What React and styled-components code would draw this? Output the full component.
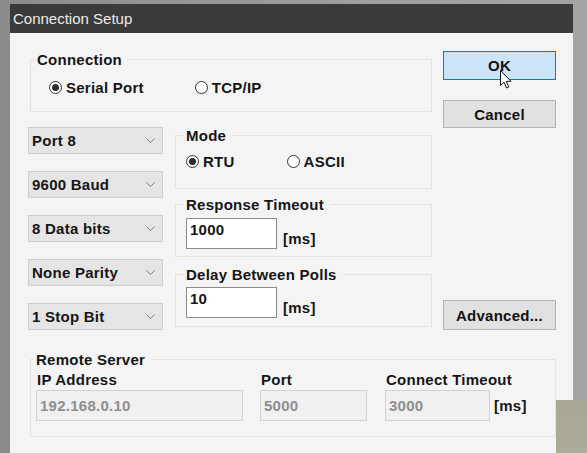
import React from 'react';
import styled, { createGlobalStyle } from 'styled-components';

const GlobalStyle = createGlobalStyle`
  html, body {
    margin: 0;
    padding: 0;
  }

  body {
    width: 587px;
    height: 453px;
    overflow: hidden;
    font-family: "Liberation Sans", Arial, sans-serif;
  }
`;

const Screen = styled.div`
  position: relative;
  height: 453px;
  box-sizing: border-box;
  padding: 4px 14px 0 10px;
  overflow: hidden;
  background: linear-gradient(to right, #8b8b8b, #9e9e9e 60%, #a4a4a4);
`;

const Desktop = styled.div`
  position: absolute;
  right: 0;
  bottom: 0;
  width: 31px;
  height: 53px;
  background: linear-gradient(to bottom, #a9a896, #adac9b);
`;

const Dialog = styled.div`
  display: flex;
  flex-direction: column;
  width: 563px;
  height: 470px;
  background: #f4f4f4;
`;

const TitleBar = styled.div`
  display: flex;
  align-items: center;
  height: 29px;
  padding-left: 3px;
  background: #3a3a3a;
  color: #ececec;
  font-size: 15px;
`;

const Body = styled.div`
  display: grid;
  grid-template-columns: 402px 113px;
  grid-template-areas:
    'conn buttons'
    'main buttons'
    'remote remote';
  column-gap: 11px;
  padding: 18px 17px 0 20px;
  color: #161616;
  font-size: 15px;
  font-weight: bold;
  letter-spacing: 0.25px;
  line-height: 17px;
`;

const Group = styled.fieldset`
  grid-area: ${(p) => p.$area || 'auto'};
  margin: ${(p) => p.$margin || '0'};
  padding: ${(p) => p.$pad};
  min-width: 0;
  border: 1px solid #e3e3e3;
`;

const Legend = styled.legend`
  margin-left: -2px;
  padding: 0 6px 0 2px;
  line-height: 17px;
`;

const RadioRow = styled.div`
  display: flex;
  align-items: center;
  gap: ${(p) => p.$gap}px;
  height: 18px;
  margin-left: ${(p) => p.$indent || 0}px;
`;

const RadioItem = styled.label`
  display: flex;
  align-items: center;
  gap: 4px;
`;

const Circle = styled.span`
  display: flex;
  align-items: center;
  justify-content: center;
  width: 13px;
  height: 13px;
  box-sizing: border-box;
  border: 1px solid #333;
  border-radius: 50%;
  background: #fff;

  &::after {
    content: '';
    display: ${(p) => (p.$checked ? 'block' : 'none')};
    width: 7px;
    height: 7px;
    border-radius: 50%;
    background: #2c2c2c;
  }
`;

const Main = styled.div`
  grid-area: main;
  display: flex;
  gap: 12px;
  margin-top: 15px;
`;

const SelectColumn = styled.div`
  display: flex;
  flex-direction: column;
  gap: 17px;
  width: 135px;
  margin-left: -2px;
`;

const Select = styled.div`
  display: flex;
  align-items: center;
  justify-content: space-between;
  height: 27px;
  box-sizing: border-box;
  padding: 0 7px 0 3px;
  background: #e5e5e5;
  border: 1px solid #cdcdcd;
`;

const GroupColumn = styled.div`
  flex: 1;
  display: flex;
  flex-direction: column;
  gap: ${(p) => p.$gap || 8}px;
`;

const ValueRow = styled.div`
  display: flex;
  align-items: ${(p) => p.$align || 'flex-end'};
  gap: ${(p) => p.$gap || 6}px;
`;

const TextBox = styled.div`
  width: ${(p) => p.$w}px;
  height: 31px;
  box-sizing: border-box;
  padding: ${(p) => (p.$disabled ? '6px 3px 0' : '2px 3px 0')};
  background: ${(p) => (p.$disabled ? '#f0f0f0' : '#ffffff')};
  border: 1px solid ${(p) => (p.$disabled ? '#d2d2d2' : '#8a8a8a')};
  color: ${(p) => (p.$disabled ? '#8e8e8e' : '#161616')};
`;

const Unit = styled.span`
  margin-bottom: ${(p) => p.$lift || 0}px;
`;

const Buttons = styled.div`
  grid-area: buttons;
  display: flex;
  flex-direction: column;
  gap: 20px;
`;

const Button = styled.div`
  position: relative;
  display: flex;
  align-items: center;
  justify-content: center;
  height: ${(p) => p.$h || 28}px;
  box-sizing: border-box;
  background: ${(p) => (p.$primary ? '#cce4f7' : '#e1e1e1')};
  border: 1px solid ${(p) => (p.$primary ? '#0a78d7' : '#b4b4b4')};
  margin-top: ${(p) => (p.$bottom ? 'auto' : '0')};
  color: #111;
`;

const Pointer = styled.svg`
  position: absolute;
  left: 56px;
  top: 18px;
`;

const RemoteGrid = styled.div`
  display: grid;
  grid-template-columns: 206px 107px auto;
  column-gap: 18px;
  row-gap: 2px;
`;

const FieldLabel = styled.span`
  padding-left: 1px;
`;

const Chevron = () => (
  <svg width="9" height="5" viewBox="0 0 9 5">
    <polyline points="0.5,0.5 4.5,4.5 8.5,0.5" fill="none" stroke="#7a7a7a" strokeWidth="1" />
  </svg>
);

const Radio = ({ checked, children }) => (
  <RadioItem>
    <Circle $checked={checked} />
    {children}
  </RadioItem>
);

const serialOptions = ['Port 8', '9600 Baud', '8 Data bits', 'None Parity', '1 Stop Bit'];

export default function App() {
  return (
    <>
      <GlobalStyle />
      <Screen>
        <Dialog>
          <TitleBar>Connection Setup</TitleBar>
          <Body>
            <Group $area="conn" $pad="10px 0 15px 6px">
              <Legend>Connection</Legend>
              <RadioRow $gap={51} $indent={12}>
                <Radio checked>Serial Port</Radio>
                <Radio>TCP/IP</Radio>
              </RadioRow>
            </Group>

            <Buttons>
              <Button $primary $h={29}>
                OK
                <Pointer width="13" height="19" viewBox="0 0 13 19">
                  <path
                    d="M0.5 0.5 L0.5 15.5 L4 12.2 L6.6 18 L8.8 17 L6.3 11.3 L11 11.3 Z"
                    fill="#fff"
                    stroke="#111"
                    strokeWidth="1"
                    strokeLinejoin="round"
                  />
                </Pointer>
              </Button>
              <Button>Cancel</Button>
              <Button $bottom $h={30}>Advanced...</Button>
            </Buttons>

            <Main>
              <SelectColumn>
                {serialOptions.map((opt) => (
                  <Select key={opt}>
                    {opt}
                    <Chevron />
                  </Select>
                ))}
              </SelectColumn>
              <GroupColumn>
                <Group $pad="8px 0 18px 10px">
                  <Legend>Mode</Legend>
                  <RadioRow $gap={52}>
                    <Radio checked>RTU</Radio>
                    <Radio>ASCII</Radio>
                  </RadioRow>
                </Group>
                <Group $pad="5px 0 7px 10px" $margin="-1px 0 0">
                  <Legend>Response Timeout</Legend>
                  <ValueRow>
                    <TextBox $w={91}>1000</TextBox>
                    <Unit $lift={2}>[ms]</Unit>
                  </ValueRow>
                </Group>
                <Group $pad="4px 0 8px 10px" $margin="1px 0 0">
                  <Legend>Delay Between Polls</Legend>
                  <ValueRow>
                    <TextBox $w={91}>10</TextBox>
                    <Unit $lift={2}>[ms]</Unit>
                  </ValueRow>
                </Group>
              </GroupColumn>
            </Main>

            <Group $area="remote" $pad="3px 0 15px 5px" $margin="21px 0 0">
              <Legend>Remote Server</Legend>
              <RemoteGrid>
                <FieldLabel>IP Address</FieldLabel>
                <FieldLabel>Port</FieldLabel>
                <FieldLabel>Connect Timeout</FieldLabel>
                <TextBox $w={207} $disabled>192.168.0.10</TextBox>
                <TextBox $w={107} $disabled>5000</TextBox>
                <ValueRow $align="center" $gap={4}>
                  <TextBox $w={105} $disabled>3000</TextBox>
                  <Unit>[ms]</Unit>
                </ValueRow>
              </RemoteGrid>
            </Group>
          </Body>
        </Dialog>
        <Desktop />
      </Screen>
    </>
  );
}
